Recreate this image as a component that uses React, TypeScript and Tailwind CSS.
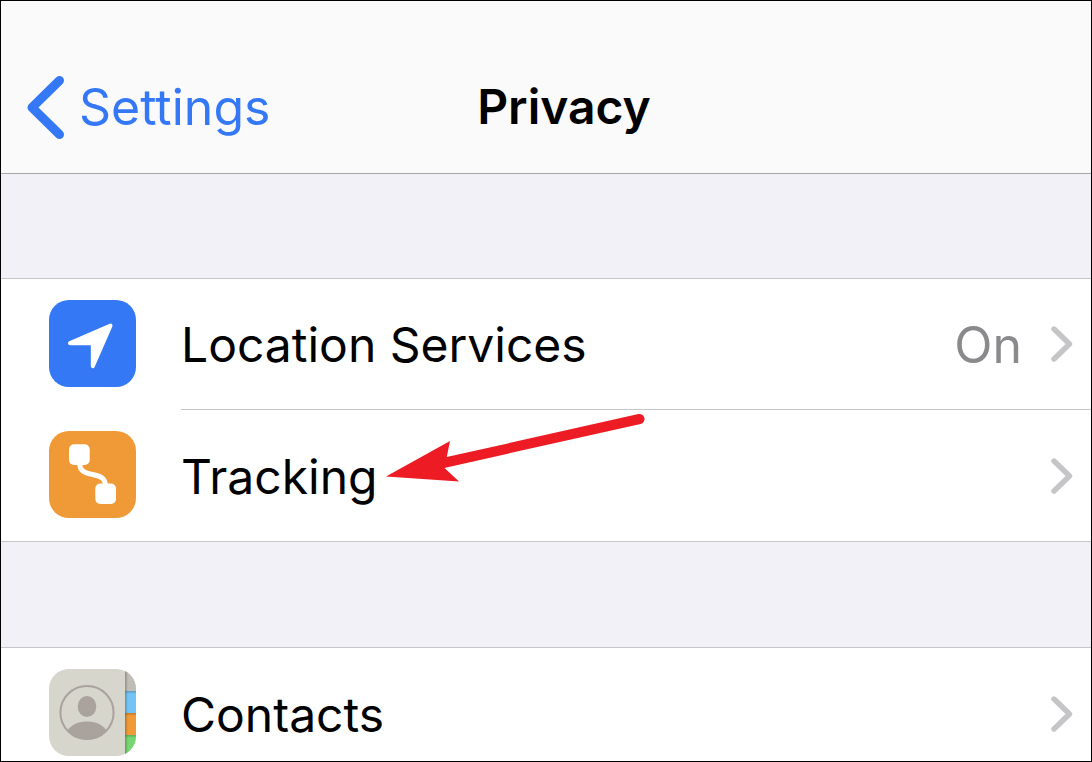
import type { ReactNode } from "react";

function LocationIcon() {
  return (
    <svg viewBox="0 0 87 87" className="size-[87px] shrink-0" aria-hidden="true">
      <rect width="87" height="87" rx="20" fill="#3478f6" />
      <path
        d="M21 43.2 61.5 25.6 43.8 66.2V43.2Z"
        fill="#fff"
        stroke="#fff"
        strokeWidth="4"
        strokeLinejoin="round"
      />
    </svg>
  );
}

function TrackingIcon() {
  return (
    <svg viewBox="0 0 87 87" className="size-[87px] shrink-0" aria-hidden="true">
      <rect width="87" height="87" rx="20" fill="#f09a37" />
      <rect x="20" y="13.3" width="20.7" height="20.7" rx="5" fill="#fff" />
      <rect x="46.3" y="52.6" width="20.7" height="20.4" rx="5" fill="#fff" />
      <path
        d="M30.8 33C30.8 48.5 56.3 38.5 56.3 54"
        fill="none"
        stroke="#fff"
        strokeWidth="5"
      />
    </svg>
  );
}

function ContactsIcon() {
  return (
    <svg viewBox="0 0 87 87" className="size-[87px] shrink-0" aria-hidden="true">
      <defs>
        <clipPath id="contacts-tile">
          <rect width="87" height="87" rx="20" />
        </clipPath>
        <clipPath id="contacts-face">
          <circle cx="38" cy="43.5" r="27" />
        </clipPath>
        <linearGradient id="tab-shade" x1="0" y1="0" x2="1" y2="0">
          <stop offset="0" stopColor="#000" stopOpacity="0.25" />
          <stop offset="1" stopColor="#000" stopOpacity="0" />
        </linearGradient>
        <linearGradient id="tab-edge" x1="0" y1="0" x2="0" y2="1">
          <stop offset="0" stopColor="#000" stopOpacity="0.2" />
          <stop offset="1" stopColor="#000" stopOpacity="0" />
        </linearGradient>
      </defs>
      <g clipPath="url(#contacts-tile)">
        <rect width="87" height="87" fill="#d6d6cd" />
        <rect x="76" width="11" height="22" fill="#c0bdb6" />
        <rect x="76" y="22" width="11" height="22" fill="#75c3f5" />
        <rect x="76" y="44" width="11" height="22" fill="#f09a37" />
        <rect x="76" y="66" width="11" height="21" fill="#76d672" />
        <rect x="76" y="22" width="11" height="3" fill="url(#tab-edge)" />
        <rect x="76" y="44" width="11" height="3" fill="url(#tab-edge)" />
        <rect x="76" y="66" width="11" height="3" fill="url(#tab-edge)" />
        <rect x="76" width="3" height="87" fill="url(#tab-shade)" />
      </g>
      <circle cx="38" cy="43.5" r="26.6" fill="none" stroke="#aaa29c" strokeWidth="2" />
      <ellipse cx="38" cy="37.5" rx="9.3" ry="10.5" fill="#aaa29c" />
      <ellipse cx="38" cy="67" rx="21" ry="14.5" fill="#aaa29c" clipPath="url(#contacts-face)" />
    </svg>
  );
}

function Chevron() {
  return (
    <svg viewBox="0 0 22 36" className="h-9 w-[22px] shrink-0" aria-hidden="true">
      <path
        d="M3 3 18.5 18 3 33"
        fill="none"
        stroke="#c5c5c7"
        strokeWidth="5.4"
        strokeLinecap="round"
        strokeLinejoin="round"
      />
    </svg>
  );
}

function PointerArrow() {
  return (
    <svg
      viewBox="0 0 260 72"
      className="pointer-events-none absolute left-[384px] top-0 h-[72px] w-[260px]"
      aria-hidden="true"
    >
      <path d="M1 66.5 65 31 59.5 58 74 71.5Z" fill="#ed1c24" />
      <path d="M56 53.5 254.5 9" stroke="#ed1c24" strokeWidth="10" strokeLinecap="round" />
    </svg>
  );
}

type RowProps = {
  icon: ReactNode;
  label: string;
  value?: string;
  divided?: boolean;
};

function Row({ icon, label, value, divided = false }: RowProps) {
  return (
    <a href="#" className="flex items-stretch pl-12">
      <span className="flex w-[132px] shrink-0 items-start pt-[21px]">{icon}</span>
      <span
        className={
          divided
            ? "flex h-[131px] grow items-center border-b border-[#c6c6c8] pr-[18px]"
            : "flex h-[131px] grow items-center pr-[18px]"
        }
      >
        <span className="grow pt-0.5">{label}</span>
        {value && (
          <span className="mr-[29px] pt-0.5 text-[50px] text-[#8a8a8d]">{value}</span>
        )}
        <Chevron />
      </span>
    </a>
  );
}

export default function App() {
  return (
    <div className="flex h-screen flex-col overflow-hidden border border-black bg-[#f2f1f7] font-['Inter',sans-serif] text-[48px] leading-[60px] text-black">
      <header className="grid shrink-0 grid-cols-[1fr_auto_1fr] items-center border-b border-[#a7a7aa] bg-[#fafafa] pt-[74px] pb-[34px] pl-[26px]">
        <a href="#" className="flex items-center gap-[14px] text-[50px] text-[#3478f6]">
          <svg viewBox="0 0 38 64" className="h-16 w-[38px] shrink-0" aria-hidden="true">
            <path
              d="M32.5 5.5 5 32.5 32.5 59.5"
              fill="none"
              stroke="currentColor"
              strokeWidth="9"
              strokeLinecap="round"
              strokeLinejoin="round"
            />
          </svg>
          Settings
        </a>
        <h1 className="ml-[10px] font-semibold">Privacy</h1>
      </header>
      <main>
        <ul className="mt-[104px] border-y border-[#c6c6c8] bg-white">
          <li>
            <Row icon={<LocationIcon />} label="Location Services" value="On" divided />
          </li>
          <li className="relative">
            <Row icon={<TrackingIcon />} label="Tracking" />
            <PointerArrow />
          </li>
        </ul>
        <ul className="mt-[105px] border-y border-[#c6c6c8] bg-white">
          <li>
            <Row icon={<ContactsIcon />} label="Contacts" />
          </li>
        </ul>
      </main>
    </div>
  );
}
